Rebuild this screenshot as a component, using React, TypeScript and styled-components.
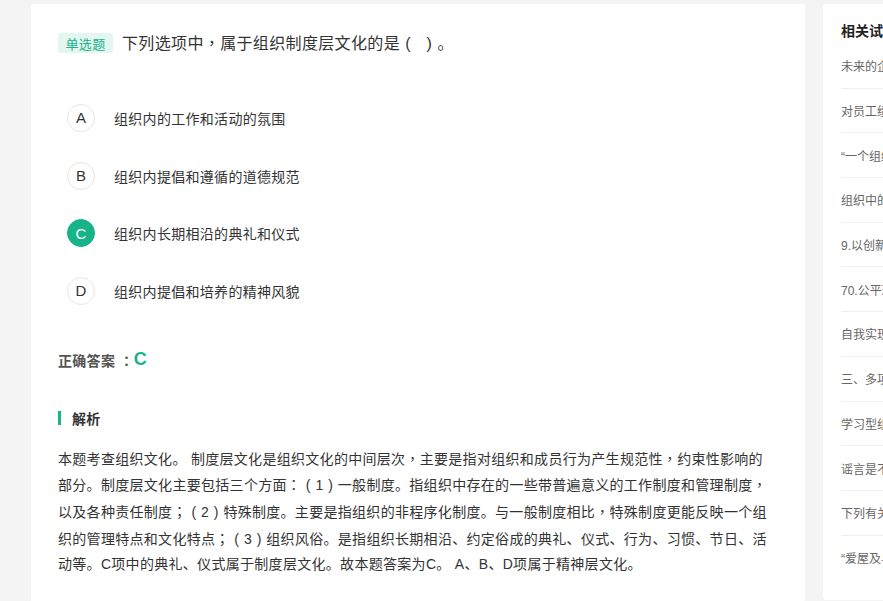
import React from "react";
import styled, { createGlobalStyle } from "styled-components";

const GREEN = "#19b38a";

const Global = createGlobalStyle`
  html, body {
    margin: 0;
    padding: 0;
    background: #f4f4f4;
    overflow: hidden;
  }
  body {
    font-family: "Liberation Sans", "Noto Sans CJK SC", sans-serif;
    color: #333;
  }
`;

const Page = styled.div`
  display: flex;
  align-items: flex-start;
  gap: 18px;
  padding: 4px 0 0 31px;
  width: 1200px;
`;

const MainCard = styled.div`
  width: 774px;
  flex-shrink: 0;
  background: #fff;
  border-radius: 4px;
  box-sizing: border-box;
  padding: 29px 32px 25px 27px;
`;

const Header = styled.div`
  display: flex;
  align-items: center;
  gap: 9px;
  height: 20px;
`;

const Badge = styled.span`
  display: inline-flex;
  align-items: center;
  justify-content: center;
  width: 55px;
  height: 20px;
  border-radius: 3px;
  background: #e3f6f0;
  color: ${GREEN};
  font-size: 13px;
  letter-spacing: 0.3px;
`;

const Title = styled.h1`
  margin: 0;
  font-size: 16px;
  font-weight: normal;
  color: #333;
  letter-spacing: 0.35px;
  line-height: 20px;
`;

const OptionList = styled.div`
  margin-top: 36px;
  padding-left: 9px;
  display: flex;
  flex-direction: column;
`;

const OptionRow = styled.div`
  display: flex;
  align-items: center;
  height: 57.7px;
  gap: 19px;
`;

const Circle = styled.span<{ $active?: boolean }>`
  width: 28px;
  height: 28px;
  box-sizing: border-box;
  border-radius: 50%;
  display: flex;
  align-items: center;
  justify-content: center;
  font-size: 15px;
  border: 1px solid ${(p) => (p.$active ? GREEN : "#e6e6e6")};
  background: ${(p) => (p.$active ? GREEN : "#fff")};
  color: ${(p) => (p.$active ? "#fff" : "#333")};
`;

const OptionText = styled.span`
  font-size: 14px;
  letter-spacing: 0.3px;
  color: #333;
`;

const Answer = styled.div`
  margin-top: 30px;
  height: 20px;
  display: flex;
  align-items: center;
  font-size: 14px;
  font-weight: bold;
  color: #555;
  letter-spacing: 0.3px;
  white-space: pre;
`;

const AnswerLetter = styled.span`
  color: ${GREEN};
  font-size: 18px;
  font-weight: bold;
`;

const SectionTitle = styled.div`
  margin-top: 38px;
  height: 20px;
  display: flex;
  align-items: center;
  gap: 11px;
  font-size: 14px;
  font-weight: bold;
  color: #333;
  letter-spacing: 0.3px;
  &::before {
    content: "";
    width: 3px;
    height: 14px;
    background: ${GREEN};
  }
`;

const Analysis = styled.p`
  margin: 18px 0 0;
  font-size: 14px;
  line-height: 25.6px;
  letter-spacing: 0.3px;
  color: #333;
`;

/* full-width punctuation centred in its em box */
const Punct = styled.span`
  font-family: "Noto Sans CJK TC", "Noto Sans CJK SC", sans-serif;
`;

/* parenthesis centred in a full em */
const Paren = styled.span`
  font-family: "Liberation Sans", sans-serif;
  padding: 0 0.333em;
`;

const SideCard = styled.div`
  width: 280px;
  flex-shrink: 0;
  background: #fff;
  border-radius: 4px;
  box-sizing: border-box;
  padding: 17px 18px 20px;
`;

const SideTitle = styled.div`
  font-size: 14px;
  font-weight: bold;
  color: #222;
  line-height: 20px;
  margin-bottom: 3px;
  white-space: nowrap;
`;

const SideItem = styled.div`
  height: 44.7px;
  box-sizing: border-box;
  display: flex;
  align-items: center;
  border-bottom: 1px solid #eee;
  font-size: 12px;
  color: #666;
  white-space: nowrap;
  overflow: hidden;
  &:last-child {
    border-bottom: none;
  }
`;

function rich(text: string): React.ReactNode[] {
  const out: React.ReactNode[] = [];
  let buf = "";
  const flush = () => {
    if (buf) out.push(buf);
    buf = "";
  };
  Array.from(text).forEach((ch, i) => {
    if (ch === "，" || ch === "：" || ch === "；") {
      flush();
      out.push(<Punct key={i}>{ch}</Punct>);
    } else if (ch === "（" || ch === "）") {
      flush();
      out.push(<Paren key={i}>{ch === "（" ? "(" : ")"}</Paren>);
    } else {
      buf += ch;
    }
  });
  flush();
  return out;
}

const options = [
  { key: "A", text: "组织内的工作和活动的氛围" },
  { key: "B", text: "组织内提倡和遵循的道德规范" },
  { key: "C", text: "组织内长期相沿的典礼和仪式", active: true },
  { key: "D", text: "组织内提倡和培养的精神风貌" },
];

const related = [
  "未来的企业文化建设的重点",
  "对员工绩效考核的目的是",
  "“一个组织的文化”是指",
  "组织中的非正式群体",
  "9.以创新为核心的组织",
  "70.公平理论的提出者是",
  "自我实现的需要属于",
  "三、多项选择题",
  "学习型组织的特点",
  "谣言是不可避免的",
  "下列有关组织文化的说法",
  "“爱屋及乌”属于",
];

const analysis =
  "本题考查组织文化。 制度层文化是组织文化的中间层次，主要是指对组织和成员行为产生规范性，约束性影响的部分。制度层文化主要包括三个方面：（1）一般制度。指组织中存在的一些带普遍意义的工作制度和管理制度，以及各种责任制度；（2）特殊制度。主要是指组织的非程序化制度。与一般制度相比，特殊制度更能反映一个组织的管理特点和文化特点；（3）组织风俗。是指组织长期相沿、约定俗成的典礼、仪式、行为、习惯、节日、活动等。C项中的典礼、仪式属于制度层文化。故本题答案为C。 A、B、D项属于精神层文化。";

export default function App() {
  return (
    <>
      <Global />
      <Page>
        <MainCard>
          <Header>
            <Badge>单选题</Badge>
            <Title>{rich("下列选项中，属于组织制度层文化的是（ ）。")}</Title>
          </Header>
          <OptionList>
            {options.map((o) => (
              <OptionRow key={o.key}>
                <Circle $active={o.active}>{o.key}</Circle>
                <OptionText>{o.text}</OptionText>
              </OptionRow>
            ))}
          </OptionList>
          <Answer>
            正确答案 <Punct>：</Punct>
            <AnswerLetter>C</AnswerLetter>
          </Answer>
          <SectionTitle>解析</SectionTitle>
          <Analysis>{rich(analysis)}</Analysis>
        </MainCard>
        <SideCard>
          <SideTitle>相关试题</SideTitle>
          {related.map((r) => (
            <SideItem key={r}>{r}</SideItem>
          ))}
        </SideCard>
      </Page>
    </>
  );
}
